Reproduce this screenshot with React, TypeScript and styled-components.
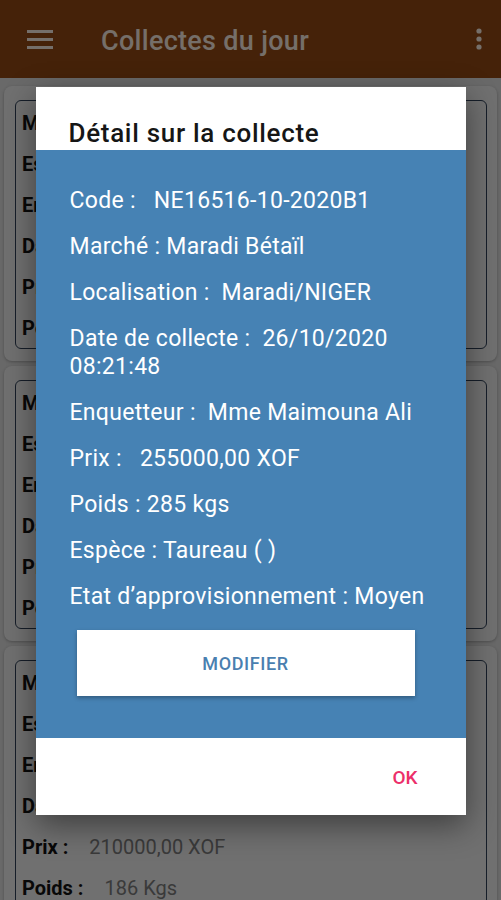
import React from 'react';
import styled, { createGlobalStyle } from 'styled-components';

const GlobalStyle = createGlobalStyle`
  html, body {
    margin: 0;
    padding: 0;
    font-family: Roboto, "Liberation Sans", sans-serif;
  }
`;

const Screen = styled.div`
  position: relative;
  width: 501px;
  height: 900px;
  overflow: hidden;
  background: #d2d2d2;
`;

const AppBar = styled.header`
  display: flex;
  align-items: center;
  height: 78px;
  padding: 0 18px 0 27px;
  box-sizing: border-box;
  background: #8b4513;
  color: #eadfd4;
`;

const Title = styled.h1`
  flex: 1;
  margin: 4px 0 0 48px;
  font-size: 27px;
  font-weight: 500;
  letter-spacing: 0.3px;
`;

const List = styled.main`
  display: flex;
  flex-direction: column;
  gap: 5px;
  padding: 8px 4px;
`;

const Card = styled.section`
  padding: 14px 10px 12px 11px;
  border-radius: 8px;
  background: #e0e0e0;
  box-shadow: 0 1px 3px rgba(0, 0, 0, 0.25);
`;

const InfoBox = styled.div`
  display: flex;
  flex-direction: column;
  padding: 1px 6px 0;
  border: 1.5px solid #2c3c52;
  border-radius: 6px;
`;

const InfoRow = styled.div`
  display: flex;
  align-items: center;
  height: 41px;
  font-size: 20px;
`;

const Label = styled.span`
  font-weight: 700;
  color: #111;
  margin-right: 21px;
`;

const Value = styled.span`
  color: #747474;
`;

const Overlay = styled.div`
  position: absolute;
  inset: 0;
  display: flex;
  align-items: center;
  justify-content: center;
  padding-top: 2px;
  background: rgba(0, 0, 0, 0.5);
`;

const Dialog = styled.div`
  width: 430px;
  display: flex;
  flex-direction: column;
  background: #fff;
  box-shadow: 0 10px 30px rgba(0, 0, 0, 0.45);
`;

const DialogTitle = styled.h2`
  height: 63px;
  margin: 0;
  padding: 32px 0 0 33px;
  box-sizing: border-box;
  font-size: 26px;
  font-weight: 500;
  line-height: 28px;
  letter-spacing: 0.7px;
  color: #161616;
`;

const DialogBody = styled.div`
  display: flex;
  flex-direction: column;
  gap: 18px;
  padding: 37px 34px 42px;
  background: #4682b4;
`;

const Detail = styled.p`
  margin: 0;
  font-size: 23px;
  line-height: 28px;
  letter-spacing: 0.3px;
  color: #fff;
  white-space: pre-wrap;
`;

const ModifyButton = styled.button`
  align-self: flex-start;
  width: 338px;
  height: 66px;
  margin: 1px 0 0 7px;
  border: none;
  background: #fff;
  color: #4a7fb0;
  font-family: inherit;
  font-size: 18px;
  font-weight: 500;
  letter-spacing: 0.6px;
  box-shadow: 0 2px 4px rgba(0, 0, 0, 0.3);
`;

const DialogFooter = styled.div`
  display: flex;
  justify-content: flex-end;
  align-items: center;
  height: 77px;
  padding: 2px 48px 0 0;
  box-sizing: border-box;
`;

const TextButton = styled.button`
  border: none;
  background: none;
  padding: 0;
  color: #ec2f6a;
  font-family: inherit;
  font-size: 19px;
  font-weight: 500;
`;

function MenuIcon() {
  return (
    <svg width="26" height="20" viewBox="0 0 26 20">
      <rect x="0" y="1" width="26" height="3" fill="currentColor" />
      <rect x="0" y="9" width="26" height="3" fill="currentColor" />
      <rect x="0" y="17" width="26" height="3" fill="currentColor" />
    </svg>
  );
}

function MoreIcon() {
  return (
    <svg width="8" height="22" viewBox="0 0 8 22">
      <circle cx="4" cy="3" r="2.6" fill="currentColor" />
      <circle cx="4" cy="11" r="2.6" fill="currentColor" />
      <circle cx="4" cy="19" r="2.6" fill="currentColor" />
    </svg>
  );
}

const collectes = [
  { marche: 'Maradi Bétaïl', espece: 'Taureau', enq: 'Mme Maimouna Ali', date: '26/10/2020', prix: '255000,00 XOF', poids: '285 Kgs' },
  { marche: 'Maradi Bétaïl', espece: 'Vache', enq: 'Mme Maimouna Ali', date: '26/10/2020', prix: '180000,00 XOF', poids: '240 Kgs' },
  { marche: 'Maradi Bétaïl', espece: 'Taurillon', enq: 'Mme Maimouna Ali', date: '26/10/2020', prix: '210000,00 XOF', poids: '186 Kgs' },
];

const details = [
  'Code :   NE16516-10-2020B1',
  'Marché : Maradi Bétaïl',
  'Localisation :  Maradi/NIGER',
  'Date de collecte :  26/10/2020\n08:21:48',
  'Enquetteur :  Mme Maimouna Ali',
  'Prix :   255000,00 XOF',
  'Poids : 285 kgs',
  'Espèce : Taureau ( )',
  'Etat d’approvisionnement : Moyen',
];

export default function App() {
  return (
    <Screen>
      <GlobalStyle />
      <AppBar>
        <MenuIcon />
        <Title>Collectes du jour</Title>
        <MoreIcon />
      </AppBar>
      <List>
        {collectes.map((c, i) => (
          <Card key={i}>
            <InfoBox>
              <InfoRow><Label>Marché :</Label><Value>{c.marche}</Value></InfoRow>
              <InfoRow><Label>Espèce :</Label><Value>{c.espece}</Value></InfoRow>
              <InfoRow><Label>Enquetteur :</Label><Value>{c.enq}</Value></InfoRow>
              <InfoRow><Label>Date :</Label><Value>{c.date}</Value></InfoRow>
              <InfoRow><Label>Prix :</Label><Value>{c.prix}</Value></InfoRow>
              <InfoRow><Label>Poids :</Label><Value>{c.poids}</Value></InfoRow>
            </InfoBox>
          </Card>
        ))}
      </List>
      <Overlay>
        <Dialog>
          <DialogTitle>Détail sur la collecte</DialogTitle>
          <DialogBody>
            {details.map((d) => (
              <Detail key={d}>{d}</Detail>
            ))}
            <ModifyButton>MODIFIER</ModifyButton>
          </DialogBody>
          <DialogFooter>
            <TextButton>OK</TextButton>
          </DialogFooter>
        </Dialog>
      </Overlay>
    </Screen>
  );
}
